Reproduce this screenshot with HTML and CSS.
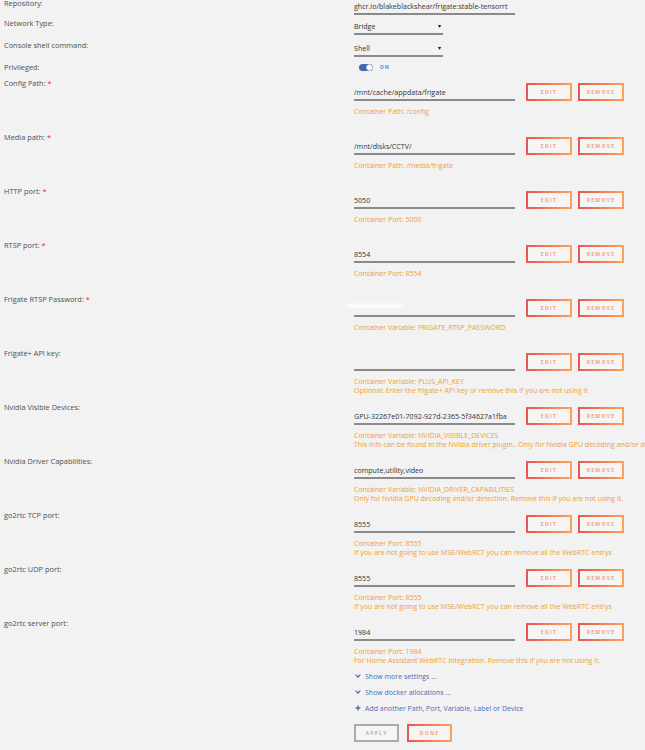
FILE: index.html
```html
<!DOCTYPE html>
<html lang="en">
<head>
  <meta charset="UTF-8">
  <meta name="viewport" content="width=device-width, initial-scale=1.0">
  <title>Update Container</title>
  <link rel="stylesheet" href="styles.css">
</head>
<body>
  <div id="template">
    <div class="row row-simple">
      <div class="label">Repository:</div>
      <div class="field"><input class="text" type="text" value="ghcr.io/blakeblackshear/frigate:stable-tensorrt"></div>
    </div>
    <div class="row row-simple">
      <div class="label">Network Type:</div>
      <div class="field"><div class="select"><span>Bridge</span><span class="caret">&#9662;</span></div></div>
    </div>
    <div class="row row-simple">
      <div class="label">Console shell command:</div>
      <div class="field"><div class="select"><span>Shell</span><span class="caret">&#9662;</span></div></div>
    </div>
    <div class="row row-simple row-toggle">
      <div class="label">Privileged:</div>
      <div class="field">
        <div class="switch"><span class="track"></span><span class="knob"></span></div>
        <span class="switch-text">ON</span>
      </div>
    </div>

    <div class="row row-entry">
      <div class="label">Config Path: <span class="req">*</span></div>
      <div class="field">
        <div class="entry-line">
          <input class="text" type="text" value="/mnt/cache/appdata/frigate">
          <button class="btn">Edit</button><button class="btn">Remove</button>
        </div>
        <div class="desc">Container Path: /config</div>
      </div>
    </div>
    <div class="row row-entry">
      <div class="label">Media path: <span class="req">*</span></div>
      <div class="field">
        <div class="entry-line">
          <input class="text" type="text" value="/mnt/disks/CCTV/">
          <button class="btn">Edit</button><button class="btn">Remove</button>
        </div>
        <div class="desc">Container Path: /media/frigate</div>
      </div>
    </div>
    <div class="row row-entry">
      <div class="label">HTTP port: <span class="req">*</span></div>
      <div class="field">
        <div class="entry-line">
          <input class="text" type="text" value="5050">
          <button class="btn">Edit</button><button class="btn">Remove</button>
        </div>
        <div class="desc">Container Port: 5000</div>
      </div>
    </div>
    <div class="row row-entry">
      <div class="label">RTSP port: <span class="req">*</span></div>
      <div class="field">
        <div class="entry-line">
          <input class="text" type="text" value="8554">
          <button class="btn">Edit</button><button class="btn">Remove</button>
        </div>
        <div class="desc">Container Port: 8554</div>
      </div>
    </div>
    <div class="row row-entry">
      <div class="label">Frigate RTSP Password: <span class="req">*</span></div>
      <div class="field">
        <div class="entry-line">
          <span class="masked"><input class="text" type="text" value=""></span>
          <button class="btn">Edit</button><button class="btn">Remove</button>
        </div>
        <div class="desc">Container Variable: FRIGATE_RTSP_PASSWORD</div>
      </div>
    </div>
    <div class="row row-entry">
      <div class="label">Frigate+ API key:</div>
      <div class="field">
        <div class="entry-line">
          <input class="text" type="text" value="">
          <button class="btn">Edit</button><button class="btn">Remove</button>
        </div>
        <div class="desc">Container Variable: PLUS_API_KEY</div>
        <div class="desc">Optional: Enter the frigate+ API key or remove this if you are not using it</div>
      </div>
    </div>
    <div class="row row-entry">
      <div class="label">Nvidia Visible Devices:</div>
      <div class="field">
        <div class="entry-line">
          <input class="text" type="text" value="GPU-32267e01-7092-927d-2365-5f34627a1fba">
          <button class="btn">Edit</button><button class="btn">Remove</button>
        </div>
        <div class="desc">Container Variable: NVIDIA_VISIBLE_DEVICES</div>
        <div class="desc">This info can be found in the NVidia driver plugin.. Only for Nvidia GPU decoding and/or detection. Remove this if you are not using it.</div>
      </div>
    </div>
    <div class="row row-entry">
      <div class="label">Nvidia Driver Capabilities:</div>
      <div class="field">
        <div class="entry-line">
          <input class="text" type="text" value="compute,utility,video">
          <button class="btn">Edit</button><button class="btn">Remove</button>
        </div>
        <div class="desc">Container Variable: NVIDIA_DRIVER_CAPABILITIES</div>
        <div class="desc">Only for Nvidia GPU decoding and/or detection. Remove this if you are not using it.</div>
      </div>
    </div>
    <div class="row row-entry">
      <div class="label">go2rtc TCP port:</div>
      <div class="field">
        <div class="entry-line">
          <input class="text" type="text" value="8555">
          <button class="btn">Edit</button><button class="btn">Remove</button>
        </div>
        <div class="desc">Container Port: 8555</div>
        <div class="desc">If you are not going to use MSE/WebRCT you can remove all the WebRTC entrys</div>
      </div>
    </div>
    <div class="row row-entry">
      <div class="label">go2rtc UDP port:</div>
      <div class="field">
        <div class="entry-line">
          <input class="text" type="text" value="8555">
          <button class="btn">Edit</button><button class="btn">Remove</button>
        </div>
        <div class="desc">Container Port: 8555</div>
        <div class="desc">If you are not going to use MSE/WebRCT you can remove all the WebRTC entrys</div>
      </div>
    </div>
    <div class="row row-entry">
      <div class="label">go2rtc server port:</div>
      <div class="field">
        <div class="entry-line">
          <input class="text" type="text" value="1984">
          <button class="btn">Edit</button><button class="btn">Remove</button>
        </div>
        <div class="desc">Container Port: 1984</div>
        <div class="desc">For Home Assistant WebRTC integration. Remove this if you are not using it.</div>
      </div>
    </div>

    <div class="row">
      <div></div>
      <div class="field">
        <div class="links">
          <a class="link" href="#">
            <svg class="icon" viewBox="0 0 10 7"><path d="M1 1.2 L5 5.2 L9 1.2" fill="none" stroke="currentColor" stroke-width="2.2"/></svg>
            Show more settings ...
          </a>
          <a class="link" href="#">
            <svg class="icon" viewBox="0 0 10 7"><path d="M1 1.2 L5 5.2 L9 1.2" fill="none" stroke="currentColor" stroke-width="2.2"/></svg>
            Show docker allocations ...
          </a>
          <a class="link" href="#">
            <svg class="icon" viewBox="0 0 10 10"><path d="M5 1 V9 M1 5 H9" fill="none" stroke="currentColor" stroke-width="2.4"/></svg>
            Add another Path, Port, Variable, Label or Device
          </a>
        </div>
        <div class="actions">
          <button class="btn btn-wide" disabled>Apply</button>
          <button class="btn btn-wide">Done</button>
        </div>
      </div>
    </div>
  </div>
</body>
</html>
```

FILE: styles.css
```css
body {
  margin: 0;
  background-color: #f2f2f2;
  color: #4f4f4f;
  font-family: 'Open Sans', 'Noto Sans', sans-serif;
  font-size: 7px;
  overflow: hidden;
}

#template {
  margin-top: -2px;
}

.row {
  display: grid;
  grid-template-columns: 354px 1fr;
}

.label {
  padding-left: 4px;
  line-height: 10px;
  font-size: 7.4px;
  white-space: nowrap;
}

.req {
  color: #e22828;
}

.field {
  min-width: 0;
  white-space: nowrap;
}

/* top settings */
.row-simple {
  height: 22px;
}

.row-simple:first-child {
  height: 20px;
}

.row-toggle {
  height: 16px;
}

.text {
  display: block;
  box-sizing: border-box;
  width: 161px;
  height: 17px;
  padding: 1px 0 0;
  border: none;
  border-bottom: 2px solid #8a8a8a;
  background: transparent;
  color: #333;
  font-family: inherit;
  font-size: 7.1px;
  outline: none;
}

.select {
  box-sizing: border-box;
  display: flex;
  justify-content: space-between;
  align-items: center;
  width: 89px;
  height: 17px;
  padding: 1px 2px 0 0;
  border-bottom: 2px solid #8a8a8a;
  color: #333;
  font-size: 7.1px;
}

.caret {
  font-size: 6px;
  color: #111;
}

.field .switch {
  display: inline-block;
  vertical-align: top;
  position: relative;
  width: 14px;
  height: 7px;
  margin: 2px 0 0 5px;
}

.switch .track {
  position: absolute;
  inset: 0;
  border-radius: 4px;
  background: #3f67b4;
}

.switch .knob {
  position: absolute;
  right: 0;
  top: 0;
  box-sizing: border-box;
  width: 7px;
  height: 7px;
  border-radius: 50%;
  background: #fff;
  border: 1px solid #c8c8c8;
}

.switch-text {
  display: inline-block;
  vertical-align: top;
  margin: 2px 0 0 5px;
  line-height: 7px;
  font-size: 5px;
  font-weight: 700;
  letter-spacing: 1px;
  color: #4a90d9;
}

/* path / port / variable entries */
.row-entry {
  height: 54px;
}

.entry-line {
  display: flex;
  align-items: flex-end;
  margin-top: 5px;
  height: 18px;
}

.entry-line .text {
  height: 18px;
  padding-top: 2px;
}

.entry-line .btn:first-of-type {
  margin-left: 11px;
}

.entry-line .btn + .btn {
  margin-left: 6px;
}

.masked {
  position: relative;
}

.masked::after {
  content: "";
  position: absolute;
  left: -8px;
  top: 5px;
  width: 57px;
  height: 4px;
  border-radius: 2px;
  background: #fff;
  filter: blur(1.5px);
}

.desc {
  color: #f0a030;
  line-height: 9px;
}

.entry-line + .desc {
  margin-top: 6px;
}

.btn {
  box-sizing: border-box;
  width: 46px;
  height: 18px;
  padding: 0;
  border: 2px solid;
  border-image: linear-gradient(90deg, #ea5555, #ffa055) 1;
  background: #f5f5f5;
  color: #f4a07a;
  font-family: inherit;
  font-size: 5px;
  font-weight: 700;
  letter-spacing: 1.3px;
  text-transform: uppercase;
  cursor: pointer;
}

/* bottom links and buttons */
.links {
  margin-top: -4px;
}

.link {
  display: flex;
  align-items: center;
  height: 16px;
  color: #4b6cb7;
  text-decoration: none;
}

.link .icon {
  width: 6px;
  height: 6px;
  margin: 0 4px 0 1px;
}

.actions {
  display: flex;
  gap: 8px;
  margin-top: 8px;
}

.btn-wide {
  width: 45px;
  height: 18px;
}

.btn[disabled] {
  border-image: none;
  border-color: #ababab;
  color: #b3b3b3;
  cursor: default;
}
```
